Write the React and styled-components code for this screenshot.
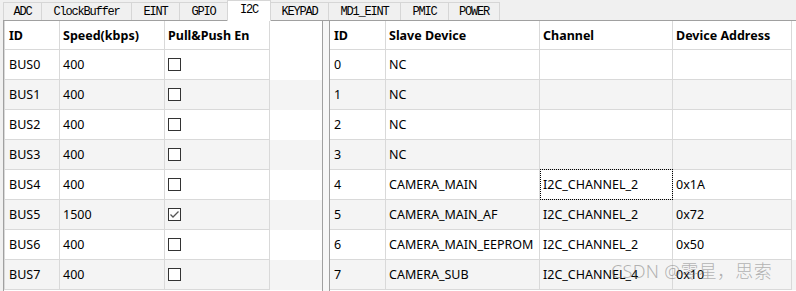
import React from 'react';
import styled, {createGlobalStyle} from 'styled-components';

const Grid_Line = '#d9d9d9';
const Frame_Line = '#a0a0a0';
const Tab_Line = '#d6d6d6';
const Panel_Grey = '#f0f0f0';
const Row_Alt = '#f4f4f4';

const GlobalStyle = createGlobalStyle`
    html, body { margin: 0; padding: 0; background: ${Panel_Grey}; }
    * { box-sizing: border-box; }
`

const tabs = [
    {name: 'ADC', w: 39},
    {name: 'ClockBuffer', w: 90},
    {name: 'EINT', w: 48},
    {name: 'GPIO', w: 48},
    {name: 'I2C', w: 44, active: true},
    {name: 'KEYPAD', w: 58},
    {name: 'MD1_EINT', w: 72},
    {name: 'PMIC', w: 48},
    {name: 'POWER', w: 51},
];

const busRows = [
    ['BUS0', '400', false],
    ['BUS1', '400', false],
    ['BUS2', '400', false],
    ['BUS3', '400', false],
    ['BUS4', '400', false],
    ['BUS5', '1500', true],
    ['BUS6', '400', false],
    ['BUS7', '400', false],
];

const deviceRows = [
    ['0', 'NC', '', ''],
    ['1', 'NC', '', ''],
    ['2', 'NC', '', ''],
    ['3', 'NC', '', ''],
    ['4', 'CAMERA_MAIN', 'I2C_CHANNEL_2', '0x1A'],
    ['5', 'CAMERA_MAIN_AF', 'I2C_CHANNEL_2', '0x72'],
    ['6', 'CAMERA_MAIN_EEPROM', 'I2C_CHANNEL_2', '0x50'],
    ['7', 'CAMERA_SUB', 'I2C_CHANNEL_4', '0x10'],
];

const leftCols = [56, 105, 105];
const rightCols = [56, 154, 133, 119];

const Page = styled.div`
    position: relative;
    width: 796px;
    height: 291px;
    overflow: hidden;
    background: ${Panel_Grey};
    font-family: "Noto Sans", "Liberation Sans", sans-serif;
    font-size: 12.5px;
    color: #000;
`

const TabStrip = styled.div`
    display: flex;
    align-items: flex-end;
    height: 20px;
    padding-left: 3px;
    position: relative;
    z-index: 2;
`

const Tab = styled.div`
    width: ${props=>props.w}px;
    height: ${props=>props.active ? '21px' : '18px'};
    margin-bottom: ${props=>props.active ? '-1px' : '0'};
    display: flex;
    align-items: center;
    justify-content: center;
    padding-bottom: ${props=>props.active ? '2px' : '0'};
    background: ${props=>props.active ? '#ffffff' : Panel_Grey};
    border-top: 1px solid ${Tab_Line};
    border-right: 1px solid ${Tab_Line};
    border-left: ${props=>props.first || props.active ? `1px solid ${Tab_Line}` : 'none'};
    margin-left: ${props=>props.active ? '-1px' : '0'};
    font-family: "Liberation Mono", "DejaVu Sans Mono", monospace;
    font-size: 12px;
    letter-spacing: -1.2px;
    color: #000;
`

const Content = styled.div`
    display: flex;
    height: 271px;
    margin-left: 3px;
    border-top: 1px solid ${Frame_Line};
`

const Panel = styled.div`
    width: ${props=>props.Width}px;
    height: 100%;
    background: #fff;
    border-left: 1px solid ${Frame_Line};
    border-right: ${props=>props.closed ? `1px solid ${Frame_Line}` : 'none'};
    overflow: hidden;
`

const Splitter = styled.div`
    width: 6px;
    height: 100%;
    background: #f7f7f7;
`

const Row = styled.div`
    display: flex;
    height: ${props=>props.header ? '29px' : '30px'};
    background: ${props=>props.alt ? Row_Alt : '#fff'};
`

const Cell = styled.div`
    position: relative;
    width: ${props=>props.Width}px;
    flex: none;
    display: flex;
    align-items: center;
    padding: 0 0 0 ${props=>props.first ? '4px' : '3px'};
    border-right: 1px solid ${Grid_Line};
    border-bottom: 1px solid ${Grid_Line};
    border-left: ${props=>props.edge ? `1px solid ${Grid_Line}` : 'none'};
    font-weight: ${props=>props.header ? 'bold' : 'normal'};
    white-space: nowrap;

    ${props=>props.focused && `
        &::after {
            content: '';
            position: absolute;
            top: -1px;
            left: 0;
            right: -1px;
            bottom: -1px;
            border: 1px dotted #000;
        }
    `}
`

const Box = styled.span`
    width: 13px;
    height: 13px;
    border: 1px solid #333;
    background: #fff;
    display: flex;
    align-items: center;
    justify-content: center;
`

const Watermark = styled.div`
    position: absolute;
    left: 611px;
    top: 257px;
    font-family: "Noto Sans", "Noto Sans CJK SC", sans-serif;
    font-size: 18px;
    font-weight: 300;
    color: rgba(110, 110, 110, 0.5);
    white-space: nowrap;
    letter-spacing: 0.3px;
    pointer-events: none;
`

const CheckBox = ({checked}) => <Box>
    {checked && <svg width="11" height="11" viewBox="0 0 11 11">
        <path d="M1.5 5.5 L4 8 L9.5 2.5" fill="none" stroke="#555" strokeWidth="1.3"/>
    </svg>}
</Box>

export default function App(){
    return <Page>
        <GlobalStyle/>
        <TabStrip>
            {tabs.map((t, i)=><Tab key={t.name} w={t.w} active={t.active} first={i===0}>{t.name}</Tab>)}
        </TabStrip>
        <Content>
            <Panel Width={320} closed>
                <Row header>
                    {['ID', 'Speed(kbps)', 'Pull&Push En'].map((h, i)=>
                        <Cell key={h} header Width={leftCols[i]} first={i===0} edge={i===0}>{h}</Cell>)}
                </Row>
                {busRows.map((r, ri)=><Row key={r[0]} alt={ri%2===1}>
                    <Cell Width={leftCols[0]} first edge>{r[0]}</Cell>
                    <Cell Width={leftCols[1]}>{r[1]}</Cell>
                    <Cell Width={leftCols[2]}><CheckBox checked={r[2]}/></Cell>
                </Row>)}
            </Panel>
            <Splitter/>
            <Panel Width={467}>
                <Row header>
                    {['ID', 'Slave Device', 'Channel', 'Device Address'].map((h, i)=>
                        <Cell key={h} header Width={rightCols[i]} first={i===0}>{h}</Cell>)}
                </Row>
                {deviceRows.map((r, ri)=><Row key={r[0]} alt={ri%2===1}>
                    {r.map((v, ci)=><Cell key={ci} Width={rightCols[ci]} first={ci===0}
                        focused={ri===4 && ci===2}>{v}</Cell>)}
                </Row>)}
            </Panel>
        </Content>
        <Watermark>CSDN @零星，思索</Watermark>
    </Page>
}
